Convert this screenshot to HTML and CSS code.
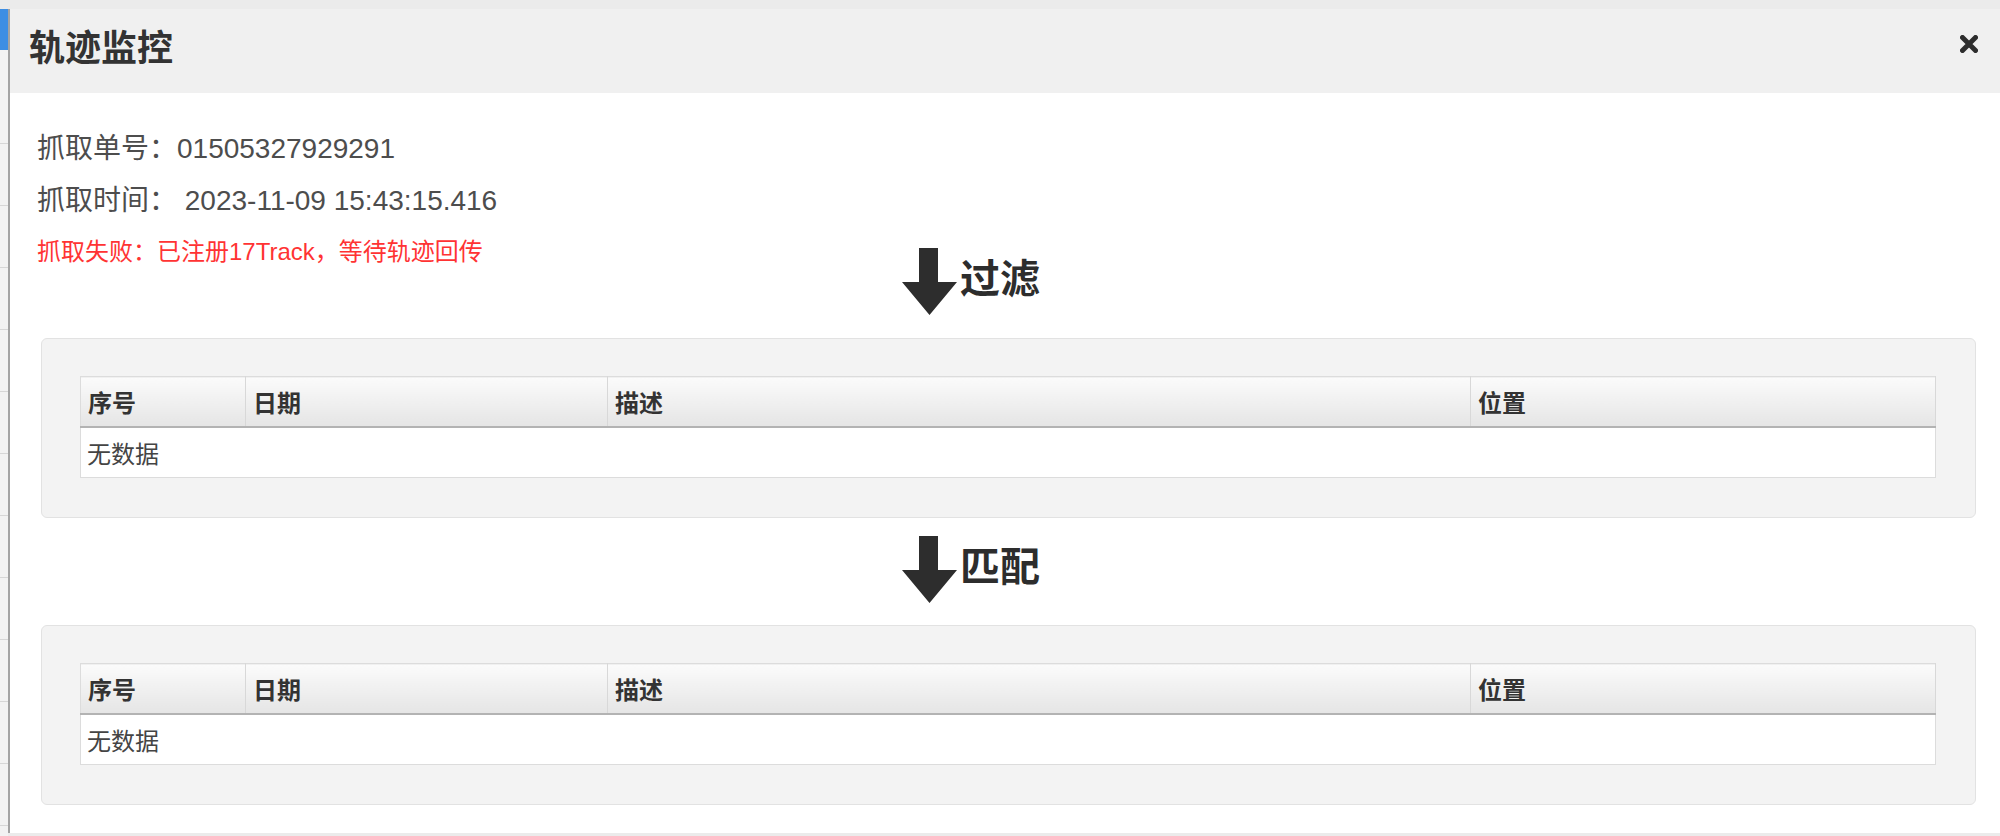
FILE: index.html
```html
<!DOCTYPE html>
<html lang="zh-CN">
<head>
    <meta charset="UTF-8">
    <meta name="viewport" content="width=device-width, initial-scale=1.0">
    <title>轨迹监控</title>
    <link rel="stylesheet" href="styles.css">
</head>
<body>
    <div class="backdrop">
        <div class="backdrop-tab"></div>
        <div class="backdrop-rows"></div>
    </div>

    <div class="modal">
        <div class="modal-header">
            <h3 class="modal-title">轨迹监控</h3>
            <span class="modal-close" title="关闭">
                <svg width="18" height="18" viewBox="0 0 18 18">
                    <path d="M2.5 2.5 L15.5 15.5 M15.5 2.5 L2.5 15.5" stroke="#2d2d2d" stroke-width="5" stroke-linecap="round"/>
                </svg>
            </span>
        </div>

        <div class="modal-body">
            <div class="info-line">抓取单号：01505327929291</div>
            <div class="info-line">抓取时间： 2023-11-09 15:43:15.416</div>
            <div class="info-error">抓取失败：已注册17Track，等待轨迹回传</div>

            <div class="flow-title first">
                <svg class="flow-arrow" width="55" height="67" viewBox="0 0 55 67">
                    <polygon points="17,0 36,0 36,34 55,34 27.5,67 0,34 17,34" fill="#2d2d2d"/>
                </svg>
                <span>过滤</span>
            </div>
            <div class="panel">
                <table class="grid">
                    <colgroup>
                        <col style="width: 165px">
                        <col style="width: 362px">
                        <col style="width: 863px">
                        <col>
                    </colgroup>
                    <thead>
                        <tr><th>序号</th><th>日期</th><th>描述</th><th>位置</th></tr>
                    </thead>
                    <tbody>
                        <tr><td colspan="4">无数据</td></tr>
                    </tbody>
                </table>
            </div>

            <div class="flow-title">
                <svg class="flow-arrow" width="55" height="67" viewBox="0 0 55 67">
                    <polygon points="17,0 36,0 36,34 55,34 27.5,67 0,34 17,34" fill="#2d2d2d"/>
                </svg>
                <span>匹配</span>
            </div>
            <div class="panel">
                <table class="grid">
                    <colgroup>
                        <col style="width: 165px">
                        <col style="width: 362px">
                        <col style="width: 863px">
                        <col>
                    </colgroup>
                    <thead>
                        <tr><th>序号</th><th>日期</th><th>描述</th><th>位置</th></tr>
                    </thead>
                    <tbody>
                        <tr><td colspan="4">无数据</td></tr>
                    </tbody>
                </table>
            </div>
        </div>
    </div>
</body>
</html>
```

FILE: styles.css
```css
* {
    box-sizing: border-box;
}

body {
    margin: 0;
    height: 836px;
    padding-top: 9px;
    background-color: #ebebeb;
    display: flex;
    align-items: flex-start;
    overflow: hidden;
    font-family: "Liberation Sans", "Noto Sans CJK SC", sans-serif;
    color: #444;
}

.backdrop {
    width: 8px;
    height: 827px;
    background-color: #f2f2f2;
    display: flex;
    flex-direction: column;
}

.backdrop-tab {
    height: 41px;
    background-color: #3d8ee3;
}

.backdrop-rows {
    flex: 1;
    background-image: repeating-linear-gradient(to bottom, transparent 0, transparent 61px, #d6d6d6 61px, #d6d6d6 62px);
    background-position: 0 32px;
}

.modal {
    flex: 1;
    height: 824px;
    background-color: #fff;
    border-left: 2px solid #a3a3a3;
    display: flex;
    flex-direction: column;
}

.modal-header {
    height: 84px;
    background-color: #f0f0f0;
    display: flex;
    align-items: center;
    justify-content: space-between;
    padding: 0 22px 0 19px;
}

.modal-title {
    margin: 0;
    font-size: 36px;
    font-weight: bold;
    color: #333;
    line-height: 40px;
    margin-bottom: 4px;
}

.modal-close {
    display: flex;
    margin-bottom: 14px;
    cursor: pointer;
}

.modal-body {
    flex: 1;
    padding: 30px 24px 0 27px;
}

.info-line {
    font-size: 28px;
    line-height: 52px;
    color: #4d4d4d;
    white-space: pre;
}

.info-error {
    font-size: 24px;
    line-height: 26px;
    margin-top: 12px;
    color: #f33;
}

.flow-title {
    display: flex;
    justify-content: center;
    align-items: center;
    gap: 3px;
    height: 67px;
    margin: 18px 0 22px;
    padding-right: 71px;
    font-size: 40px;
    font-weight: bold;
    color: #2d2d2d;
}

.flow-title.first {
    margin-top: -17px;
    margin-bottom: 23px;
}

.flow-title span {
    line-height: 40px;
    margin-bottom: 6px;
}

.panel {
    margin-left: 4px;
    background-color: #f3f3f3;
    border: 1px solid #e2e2e2;
    border-radius: 6px;
    padding: 37px 39px 39px 38px;
}

.grid {
    width: 100%;
    border-collapse: collapse;
    table-layout: fixed;
    background-color: #fff;
    border: 1px solid #dcdcdc;
    font-size: 24px;
}

.grid th {
    height: 50px;
    padding: 0 7px;
    text-align: left;
    font-weight: bold;
    color: #333;
    background: linear-gradient(to bottom, #fbfbfb, #e5e5e5);
    border-right: 1px solid #d8d8d8;
    border-bottom: 2px solid #b3b3b3;
}

.grid td {
    height: 51px;
    padding: 0 6px;
    color: #444;
}
```
